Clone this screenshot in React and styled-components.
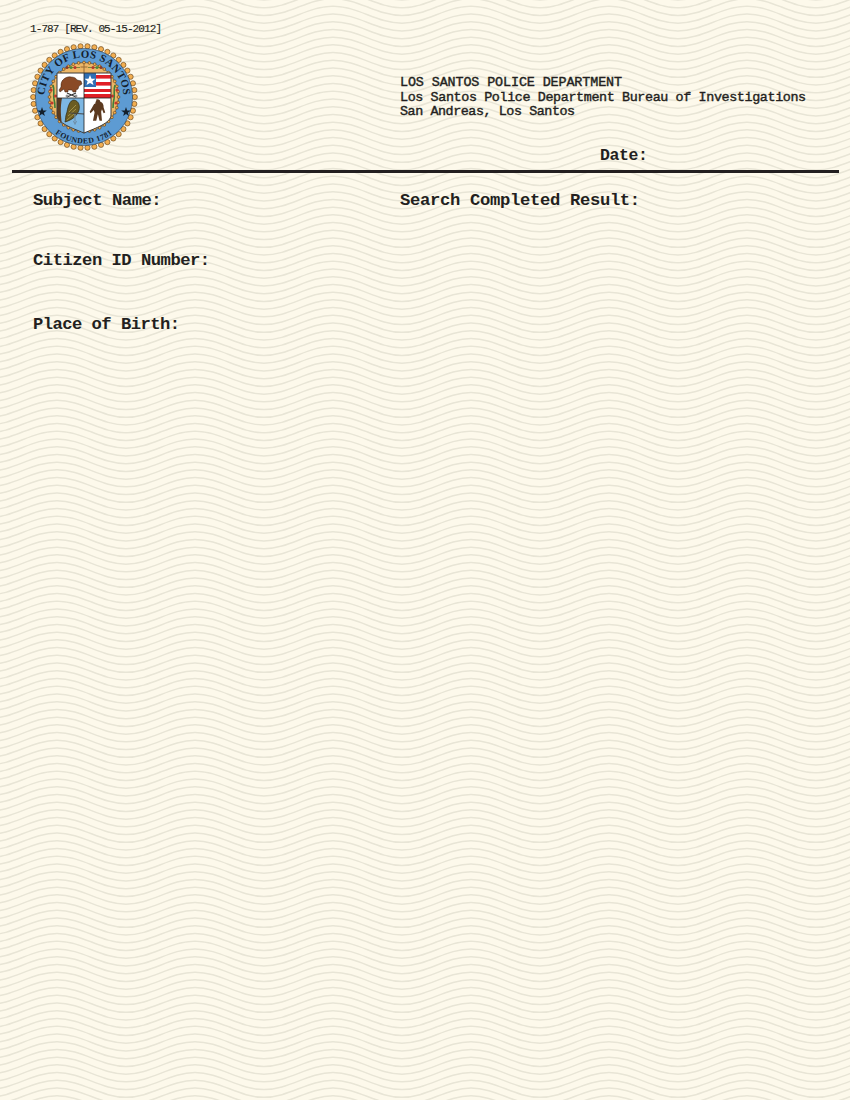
import React from 'react'
import styled, { createGlobalStyle } from 'styled-components'

const WAVE_PERIOD = 138
const WAVE_AMP = 8.5
const TILE_HEIGHT = 85
const LINE_GAP = TILE_HEIGHT / 11

// one crest to crest sine, repeated down the tile
const wavePath = y => {
    const half = WAVE_PERIOD / 2
    const a = half * 0.3642
    const b = half * 0.6358
    const top = y - WAVE_AMP
    const low = y + WAVE_AMP
    return `M0 ${top}C${a} ${top} ${b} ${low} ${half} ${low}C${half + a} ${low} ${half + b} ${top} ${WAVE_PERIOD} ${top}`
}

const waveTile = () => {
    const lines = []
    for (let i = -3; i < 15; i++) lines.push(wavePath(i * LINE_GAP))
    const svg = `<svg xmlns='http://www.w3.org/2000/svg' width='${WAVE_PERIOD}' height='${TILE_HEIGHT}'><path d='${lines.join('')}' fill='none' stroke='#e8e5d6' stroke-width='1.5'/></svg>`
    return `url("data:image/svg+xml,${encodeURIComponent(svg)}")`
}

const GlobalStyle = createGlobalStyle`
    html, body {
        margin: 0;
        padding: 0;
    }
    body {
        background: #fdf9eb;
    }
`

const Page = styled.div`
    width: 850px;
    height: 1100px;
    box-sizing: border-box;
    padding: 20px 11px 0 12px;
    background-color: #fdf9eb;
    background-image: ${waveTile()};
    background-position: 57px 7px;
    color: #231f20;
    font-family: "Liberation Mono", "DejaVu Sans Mono", monospace;
`

const Header = styled.header`
    height: 153px;
    box-sizing: border-box;
    padding-left: 18px;
    border-bottom: 3px solid #231f20;
`

const FormNumber = styled.div`
    font-size: 11px;
    letter-spacing: -0.9px;
    line-height: 18px;
    height: 23px;
    white-space: nowrap;
    -webkit-text-stroke: 0.15px #231f20;
`

const HeaderRow = styled.div`
    display: flex;
`

const Seal = styled.svg`
    flex: none;
    width: 108px;
    height: 108px;
`

const Agency = styled.div`
    margin-left: 262px;
    padding-top: 33px;
`

const AgencyLine = styled.div`
    font-size: 13.4px;
    letter-spacing: ${p => p.$track}px;
    line-height: 14.6px;
    white-space: nowrap;
    -webkit-text-stroke: 0.4px #231f20;
`

const DateLabel = styled.div`
    margin: 26px 0 0 200px;
    font-size: 16.5px;
    letter-spacing: -0.4px;
    line-height: 20px;
    font-weight: 700;
`

const Fields = styled.section`
    display: grid;
    grid-template-columns: 367px 1fr;
    padding: 17px 0 0 21px;
`

const Column = styled.div`
    display: flex;
    flex-direction: column;
`

const Label = styled.div`
    font-size: 17.2px;
    letter-spacing: ${p => p.$track}px;
    line-height: 22px;
    font-weight: 700;
    white-space: nowrap;
    margin-bottom: ${p => p.$gap || 0}px;
`

const beads = (count, radius, size, fill, stroke) =>
    Array.from({ length: count }, (_, i) => {
        const angle = (i / count) * Math.PI * 2
        return (
            <circle
                key={i}
                cx={54 + Math.cos(angle) * radius}
                cy={54 + Math.sin(angle) * radius}
                r={size}
                fill={fill}
                stroke={stroke}
                strokeWidth="0.6"
            />
        )
    })

const SHIELD = 'M27 30H81V72C81 80 66 85 54 90C42 85 27 80 27 72Z'

const CitySeal = () => (
    <Seal viewBox="0 0 108 108">
        <defs>
            <path id="sealTop" d="M14.5 54a39.5 39.5 0 0 1 79 0" />
            <path id="sealBottom" d="M7.5 54a46.5 46.5 0 0 0 93 0" />
            <clipPath id="shieldClip">
                <path d={SHIELD} />
            </clipPath>
        </defs>
        {beads(46, 50.8, 2.6, '#f2ae50', '#5a3a15')}
        <circle cx="54" cy="54" r="48.6" fill="#5d9bd3" stroke="#2b2b2b" strokeWidth="0.5" />
        <circle cx="54" cy="54" r="34.5" fill="#edb767" stroke="#2b2b2b" strokeWidth="0.5" />
        {beads(40, 34.5, 1.4, '#f2ae50', '#5a3a15')}
        <text fontFamily="Liberation Serif, serif" fontWeight="700" fontSize="10.8" fill="#14202c" letterSpacing="0.35">
            <textPath href="#sealTop" startOffset="50%" textAnchor="middle">CITY OF LOS SANTOS</textPath>
        </text>
        <text fontFamily="Liberation Serif, serif" fontWeight="700" fontSize="7.8" fill="#14202c" letterSpacing="0.5">
            <textPath href="#sealBottom" startOffset="50%" textAnchor="middle">FOUNDED 1781</textPath>
        </text>
        <path d="M12 64l1.2 3.4 3.6.1-2.9 2.2 1 3.4-2.9-2-2.9 2 1-3.4-2.9-2.2 3.6-.1z" fill="#14202c" />
        <path d="M96 64l1.2 3.4 3.6.1-2.9 2.2 1 3.4-2.9-2-2.9 2 1-3.4-2.9-2.2 3.6-.1z" fill="#14202c" />

        {/* top sprig */}
        <path d="M54 20V30M50.5 24H57.5" stroke="#9a6a34" strokeWidth="1" />
        <path d="M36 24.5H50M58 24.5H72" stroke="#5a7a30" strokeWidth="0.8" />
        <circle cx="37" cy="24.5" r="1.5" fill="#8c3b2a" />
        <circle cx="41" cy="24.5" r="1.5" fill="#4f8a3a" />
        <circle cx="45" cy="24.5" r="1.5" fill="#b5372c" />
        <circle cx="63" cy="24.5" r="1.5" fill="#b5372c" />
        <circle cx="67" cy="24.5" r="1.5" fill="#4f8a3a" />
        <circle cx="71" cy="24.5" r="1.5" fill="#8c3b2a" />

        {/* side sprigs */}
        <path d="M23 42c2 5 0 9 1 14 1 4 1 7 1 9" stroke="#3f7f3a" strokeWidth="1.6" fill="none" />
        <path d="M85 42c-2 5 0 9-1 14-1 4-1 7-1 9" stroke="#3f7f3a" strokeWidth="1.6" fill="none" />
        <circle cx="21" cy="47" r="1.6" fill="#c2372c" />
        <circle cx="25.5" cy="53" r="1.6" fill="#c2372c" />
        <circle cx="22" cy="60" r="1.6" fill="#c2372c" />
        <circle cx="87" cy="47" r="1.6" fill="#c2372c" />
        <circle cx="82.5" cy="53" r="1.6" fill="#c2372c" />
        <circle cx="86" cy="60" r="1.6" fill="#c2372c" />

        {/* shield quarters */}
        <path d={SHIELD} fill="#ffffff" />
        <g clipPath="url(#shieldClip)">
            {/* flag */}
            <rect x="54" y="32" width="27" height="3.6" fill="#e01f26" />
            <rect x="54" y="39" width="27" height="3.6" fill="#e01f26" />
            <rect x="54" y="46" width="27" height="3" fill="#e01f26" />
            <rect x="54" y="51" width="27" height="4" fill="#e01f26" />
            <rect x="54" y="30" width="12" height="14" fill="#2f6fb5" />
            <path d="M60 32l1.5 3.7 4 .1-3.1 2.5 1.1 3.8-3.5-2.2-3.5 2.2 1.1-3.8-3.1-2.5 4-.1z" fill="#ffffff" />

            {/* owl panel */}
            <rect x="27" y="55" width="27" height="36" fill="#7db7e3" />
            <path d="M27 55H32C30 65 31 73 32 82H27Z" fill="#5b3a1e" />
            <path d="M44 57c5 1 6 6 5 10-2 6-7 10-14 12 1-3 0-5 2-10 1-6 3-12 7-12z" fill="#6b5c22" stroke="#2f2a14" strokeWidth="0.7" />
            <path d="M39 69l7-7M38 73l8-7M37 77l7-6" stroke="#c9b95f" strokeWidth="0.6" />
            <path d="M40 70L54 71" stroke="#444" strokeWidth="1" />
            <path d="M45 71v7M43.5 78l1.5 3 1.500-3" stroke="#6f8ea8" strokeWidth="1.2" fill="none" />

            {/* bigfoot */}
            <path
                transform="translate(11.3 8) scale(.82)"
                d="M67 59c3-1 5 1 5 3 3 1 4 3 4 7l2 6-2 1-2-5-1 3 1 11h-3l-2-8-2 8h-4l2-10-1-3-4 4-1-2 4-7c1-2 2-3 3-3 0-1 0-2 1-3z"
                fill="#5c3a20"
            />

            {/* beaver */}
            <path d="M31 42c0-5 5-9 10-8 3 0 5 1 6 3l4 1 1 3-3 2-1 3-2 1v2h-3l-1-2h-4v2h-3l-1-3-4 3-1-2 2-3c0-1 0-2 0-2z" fill="#8a4a26" stroke="#3a2010" strokeWidth="0.5" />
            <path d="M37 54l9-4M46 54l-9-4" stroke="#333" strokeWidth="1.1" />
            <circle cx="37" cy="53" r="1.1" fill="#bdbdbd" stroke="#333" strokeWidth="0.4" />
            <circle cx="46" cy="53" r="1.1" fill="#bdbdbd" stroke="#333" strokeWidth="0.4" />
        </g>
        <path d="M27 55H81M54 30V90" stroke="#1f1f1f" strokeWidth="0.8" />
        <path d={SHIELD} fill="none" stroke="#3a3a3a" strokeWidth="1" />
    </Seal>
)

export default function App() {
    return (
        <Page>
            <GlobalStyle />
            <Header>
                <FormNumber>1-787 [REV. 05-15-2012]</FormNumber>
                <HeaderRow>
                    <CitySeal />
                    <Agency>
                        <AgencyLine $track={-0.11}>LOS SANTOS POLICE DEPARTMENT</AgencyLine>
                        <AgencyLine $track={-0.38}>Los Santos Police Department Bureau of Investigations</AgencyLine>
                        <AgencyLine $track={-0.44}>San Andreas, Los Santos</AgencyLine>
                        <DateLabel>Date:</DateLabel>
                    </Agency>
                </HeaderRow>
            </Header>
            <Fields>
                <Column>
                    <Label $gap={38} $track={-0.45}>Subject Name:</Label>
                    <Label $gap={42} $track={-0.5}>Citizen ID Number:</Label>
                    <Label $track={-0.55}>Place of Birth:</Label>
                </Column>
                <Column>
                    <Label $track={-0.32}>Search Completed Result:</Label>
                </Column>
            </Fields>
        </Page>
    )
}
